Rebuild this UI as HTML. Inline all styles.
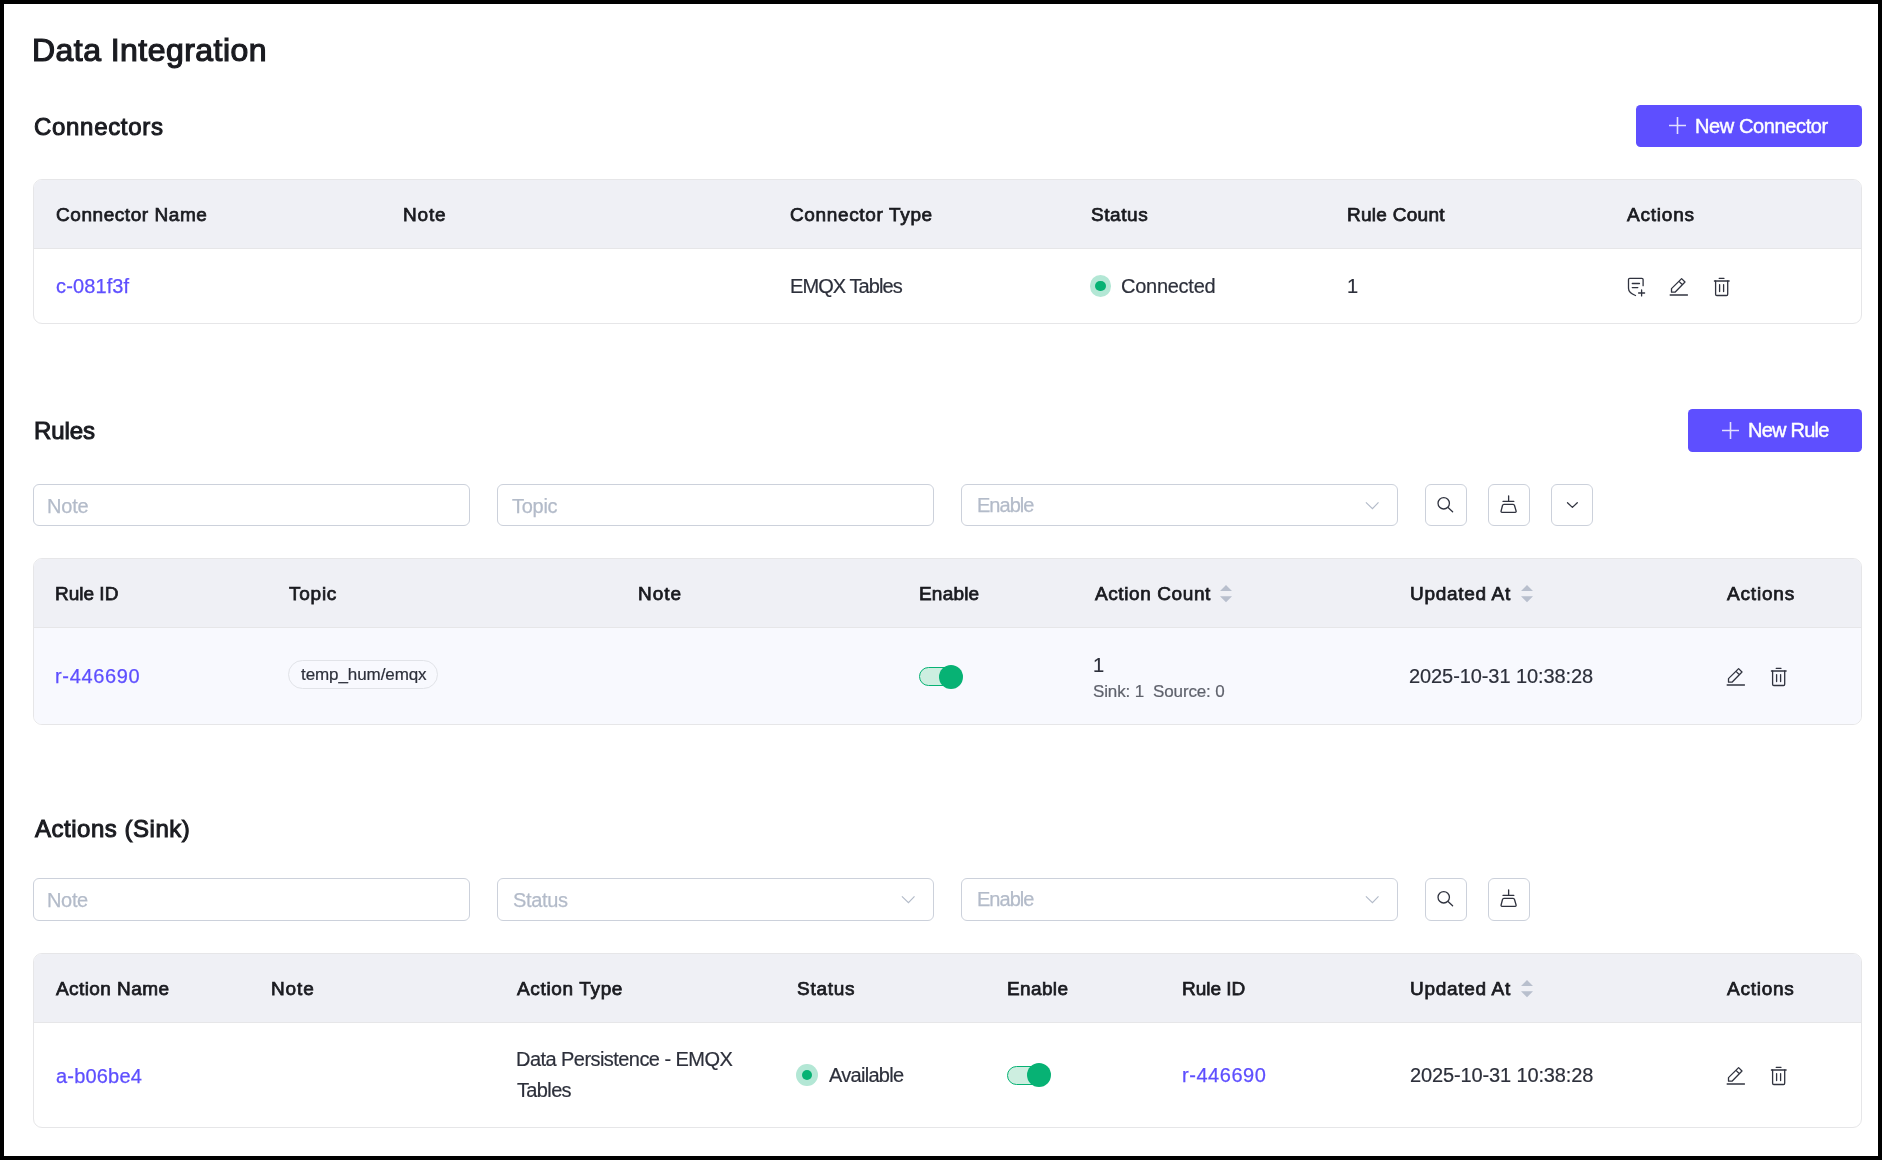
<!DOCTYPE html>
<html><head><meta charset="utf-8">
<style>
*{box-sizing:border-box;margin:0;padding:0}
html,body{width:1882px;height:1160px;overflow:hidden;background:#000}
body{font-family:"Liberation Sans",sans-serif;position:relative}
.a{position:absolute;white-space:nowrap}
.t{will-change:transform}
svg{position:absolute;overflow:visible}
</style></head><body>
<div class="a" style="left:4px;top:4px;width:1874px;height:1152px;background:#fff"></div>
<div class="a" style="left:1636px;top:105px;width:226px;height:42px;background:#5e4fff;border-radius:4.5px"></div>
<svg style="left:1669.4px;top:117.3px" width="17" height="17" viewBox="0 0 17 17"><path d="M8.5 0V17M0 8.5H17" stroke="rgba(255,255,255,0.82)" stroke-width="1.6" fill="none"/></svg>
<div class="a" style="left:33px;top:179px;width:1829px;height:145px;border:1px solid #e6e6e8;border-radius:9px;background:#fff"></div>
<div class="a" style="left:34px;top:180px;width:1827px;height:69px;background:#eff0f5;border-radius:8px 8px 0 0;border-bottom:1px solid #e6e6e8"></div>
<div class="a" style="left:1089.6px;top:275.1px;width:21.8px;height:21.8px;border-radius:50%;background:#b3e7d5"></div>
<div class="a" style="left:1095.2px;top:280.8px;width:10.6px;height:10.4px;border-radius:50%;background:#07b274"></div>
<svg style="left:1622px;top:274px" width="28" height="26" viewBox="0 0 28 26"><path d="M13.5 21.5C9.5 20 6.5 17.5 6.5 14.3V5.6Q6.5 4.4 7.7 4.4H19.9Q21.1 4.4 21.1 5.6V11.7M10.3 9.5H17.5M10.3 13.6H15.8M16.6 19H22.6M19.6 16V21.9" stroke="#30333f" stroke-width="1.3" fill="none" stroke-linecap="round"/></svg>
<svg style="left:1664px;top:274px" width="28" height="26" viewBox="0 0 28 26"><path d="M7.5 18.2V14.6L17.6 4.6L21 8L11 18.2Z M15.25 7.6L18.2 10.5" stroke="#30333f" stroke-width="1.3" fill="none" stroke-linejoin="round" stroke-linecap="round"/><path d="M5.7 21H23.9" stroke="#30333f" stroke-width="1.5"/></svg>
<svg style="left:1708px;top:274px" width="28" height="26" viewBox="0 0 28 26"><path d="M11.2 4.3H16" stroke="#30333f" stroke-width="1.3" fill="none" stroke-linecap="round"/><path d="M5.9 7H21.6" stroke="#30333f" stroke-width="1.5" fill="none"/><path d="M7.6 7V20.3Q7.6 21.5 8.8 21.5H18.5Q19.7 21.5 19.7 20.3V7M11.6 10.6V17.6M15.6 10.6V17.6" stroke="#30333f" stroke-width="1.3" fill="none" stroke-linecap="round"/></svg>
<div class="a" style="left:1688px;top:409px;width:174px;height:42.69999999999999px;background:#5e4fff;border-radius:4.5px"></div>
<svg style="left:1722px;top:421.6px" width="17" height="17" viewBox="0 0 17 17"><path d="M8.5 0V17M0 8.5H17" stroke="rgba(255,255,255,0.82)" stroke-width="1.6" fill="none"/></svg>
<div class="a" style="left:33px;top:484px;width:437px;height:42px;border:1px solid #ccd1db;border-radius:6px;background:#fff"></div>
<div class="a" style="left:497px;top:484px;width:437px;height:42px;border:1px solid #ccd1db;border-radius:6px;background:#fff"></div>
<div class="a" style="left:961px;top:484px;width:437px;height:42px;border:1px solid #ccd1db;border-radius:6px;background:#fff"></div>
<svg style="left:1365px;top:502px" width="14" height="8" viewBox="0 0 14 8"><path d="M0.9 0.3L7.45 6.75L13.5 0.4" stroke="#b3bbc9" stroke-width="1.15" fill="none"/></svg>
<div class="a" style="left:1425px;top:484px;width:42px;height:42px;border:1px solid #ccd1db;border-radius:6px;background:#fff"></div>
<svg style="left:1425px;top:484px" width="42" height="42" viewBox="0 0 42 42"><circle cx="18.72" cy="19.28" r="5.7" stroke="#30333f" stroke-width="1.3" fill="none"/><path d="M23.3 23.8L27.6 27.76" stroke="#30333f" stroke-width="1.3" stroke-linecap="round"/></svg>
<div class="a" style="left:1488px;top:484px;width:42px;height:42px;border:1px solid #ccd1db;border-radius:6px;background:#fff"></div>
<svg style="left:1488px;top:484px" width="42" height="42" viewBox="0 0 42 42"><path d="M20.62 11.83V17.3M15.03 17.41H25.8M15.9 20.41H25.1Q26.2 20.41 26.5 21.5L28.1 27Q28.38 28.28 27.2 28.28H14Q12.86 28.28 13.1 27L14.5 21.5Q14.83 20.41 15.9 20.41Z" stroke="#30333f" stroke-width="1.3" fill="none" stroke-linejoin="round" stroke-linecap="round"/></svg>
<div class="a" style="left:1551px;top:484px;width:42px;height:42px;border:1px solid #ccd1db;border-radius:6px;background:#fff"></div>
<svg style="left:1551px;top:484px" width="42" height="42" viewBox="0 0 42 42"><path d="M16.5 18.8L21.4 23.4L26.3 18.8" stroke="#30333f" stroke-width="1.3" fill="none" stroke-linecap="round" stroke-linejoin="round"/></svg>
<div class="a" style="left:33px;top:558px;width:1829px;height:167px;border:1px solid #e6e6e8;border-radius:9px;background:#fff"></div>
<div class="a" style="left:34px;top:628px;width:1827px;height:96px;background:#f8f9fe;border-radius:0 0 8px 8px"></div>
<div class="a" style="left:34px;top:559px;width:1827px;height:69px;background:#eff0f5;border-radius:8px 8px 0 0;border-bottom:1px solid #e6e6e8"></div>
<svg style="left:1220px;top:585px" width="12" height="18" viewBox="0 0 12 18"><path d="M6 0L12 6H0Z M6 17.2L12 11.2H0Z" fill="#b8bfcd"/></svg>
<svg style="left:1521px;top:585px" width="12" height="18" viewBox="0 0 12 18"><path d="M6 0L12 6H0Z M6 17.2L12 11.2H0Z" fill="#b8bfcd"/></svg>
<div class="a" style="left:288px;top:660px;width:150px;height:29px;border:1px solid #e1e3e8;border-radius:15px"></div>
<div class="a" style="left:919px;top:667.0px;width:37px;height:19px;border:1px solid #07b274;border-radius:50px;background:#cdeee0"></div>
<div class="a" style="left:939px;top:664.5px;width:24px;height:24px;border-radius:50%;background:#07b274"></div>
<svg style="left:1721px;top:664px" width="28" height="26" viewBox="0 0 28 26"><path d="M7.5 18.2V14.6L17.6 4.6L21 8L11 18.2Z M15.25 7.6L18.2 10.5" stroke="#30333f" stroke-width="1.3" fill="none" stroke-linejoin="round" stroke-linecap="round"/><path d="M5.7 21H23.9" stroke="#30333f" stroke-width="1.5"/></svg>
<svg style="left:1765px;top:664px" width="28" height="26" viewBox="0 0 28 26"><path d="M11.2 4.3H16" stroke="#30333f" stroke-width="1.3" fill="none" stroke-linecap="round"/><path d="M5.9 7H21.6" stroke="#30333f" stroke-width="1.5" fill="none"/><path d="M7.6 7V20.3Q7.6 21.5 8.8 21.5H18.5Q19.7 21.5 19.7 20.3V7M11.6 10.6V17.6M15.6 10.6V17.6" stroke="#30333f" stroke-width="1.3" fill="none" stroke-linecap="round"/></svg>
<div class="a" style="left:33px;top:878px;width:437px;height:43px;border:1px solid #ccd1db;border-radius:6px;background:#fff"></div>
<div class="a" style="left:497px;top:878px;width:437px;height:43px;border:1px solid #ccd1db;border-radius:6px;background:#fff"></div>
<svg style="left:901px;top:896px" width="14" height="8" viewBox="0 0 14 8"><path d="M0.9 0.3L7.45 6.75L13.5 0.4" stroke="#b3bbc9" stroke-width="1.15" fill="none"/></svg>
<div class="a" style="left:961px;top:878px;width:437px;height:43px;border:1px solid #ccd1db;border-radius:6px;background:#fff"></div>
<svg style="left:1365px;top:896px" width="14" height="8" viewBox="0 0 14 8"><path d="M0.9 0.3L7.45 6.75L13.5 0.4" stroke="#b3bbc9" stroke-width="1.15" fill="none"/></svg>
<div class="a" style="left:1425px;top:878px;width:42px;height:43px;border:1px solid #ccd1db;border-radius:6px;background:#fff"></div>
<svg style="left:1425px;top:878px" width="42" height="42" viewBox="0 0 42 42"><circle cx="18.72" cy="19.28" r="5.7" stroke="#30333f" stroke-width="1.3" fill="none"/><path d="M23.3 23.8L27.6 27.76" stroke="#30333f" stroke-width="1.3" stroke-linecap="round"/></svg>
<div class="a" style="left:1488px;top:878px;width:42px;height:43px;border:1px solid #ccd1db;border-radius:6px;background:#fff"></div>
<svg style="left:1488px;top:878px" width="42" height="42" viewBox="0 0 42 42"><path d="M20.62 11.83V17.3M15.03 17.41H25.8M15.9 20.41H25.1Q26.2 20.41 26.5 21.5L28.1 27Q28.38 28.28 27.2 28.28H14Q12.86 28.28 13.1 27L14.5 21.5Q14.83 20.41 15.9 20.41Z" stroke="#30333f" stroke-width="1.3" fill="none" stroke-linejoin="round" stroke-linecap="round"/></svg>
<div class="a" style="left:33px;top:953px;width:1829px;height:175px;border:1px solid #e6e6e8;border-radius:9px;background:#fff"></div>
<div class="a" style="left:34px;top:954px;width:1827px;height:69px;background:#eff0f5;border-radius:8px 8px 0 0;border-bottom:1px solid #e6e6e8"></div>
<svg style="left:1521px;top:980px" width="12" height="18" viewBox="0 0 12 18"><path d="M6 0L12 6H0Z M6 17.2L12 11.2H0Z" fill="#b8bfcd"/></svg>
<div class="a" style="left:796.1px;top:1064.1px;width:21.8px;height:21.8px;border-radius:50%;background:#b3e7d5"></div>
<div class="a" style="left:801.7px;top:1069.8px;width:10.6px;height:10.4px;border-radius:50%;background:#07b274"></div>
<div class="a" style="left:1007px;top:1065.5px;width:37px;height:19px;border:1px solid #07b274;border-radius:50px;background:#cdeee0"></div>
<div class="a" style="left:1027px;top:1063px;width:24px;height:24px;border-radius:50%;background:#07b274"></div>
<svg style="left:1721px;top:1063px" width="28" height="26" viewBox="0 0 28 26"><path d="M7.5 18.2V14.6L17.6 4.6L21 8L11 18.2Z M15.25 7.6L18.2 10.5" stroke="#30333f" stroke-width="1.3" fill="none" stroke-linejoin="round" stroke-linecap="round"/><path d="M5.7 21H23.9" stroke="#30333f" stroke-width="1.5"/></svg>
<svg style="left:1765px;top:1063px" width="28" height="26" viewBox="0 0 28 26"><path d="M11.2 4.3H16" stroke="#30333f" stroke-width="1.3" fill="none" stroke-linecap="round"/><path d="M5.9 7H21.6" stroke="#30333f" stroke-width="1.5" fill="none"/><path d="M7.6 7V20.3Q7.6 21.5 8.8 21.5H18.5Q19.7 21.5 19.7 20.3V7M11.6 10.6V17.6M15.6 10.6V17.6" stroke="#30333f" stroke-width="1.3" fill="none" stroke-linecap="round"/></svg>
<div class="a t" style="left:31.70px;top:34.11px;font-size:32px;line-height:32px;color:#1a1b20;letter-spacing:0.453px;-webkit-text-stroke:1.2px #1a1b20;">Data Integration</div>
<div class="a t" style="left:33.70px;top:114.88px;font-size:24px;line-height:24px;color:#1a1b20;letter-spacing:0.689px;-webkit-text-stroke:1.0px #1a1b20;">Connectors</div>
<div class="a t" style="left:33.60px;top:418.78px;font-size:24px;line-height:24px;color:#1a1b20;letter-spacing:-0.100px;-webkit-text-stroke:1.0px #1a1b20;">Rules</div>
<div class="a t" style="left:34.80px;top:816.98px;font-size:24px;line-height:24px;color:#1a1b20;letter-spacing:0.523px;-webkit-text-stroke:1.0px #1a1b20;">Actions (Sink)</div>
<div class="a t" style="left:1695.20px;top:116.07px;font-size:20px;line-height:20px;color:#fff;letter-spacing:-0.383px;-webkit-text-stroke:0.45px #fff;">New Connector</div>
<div class="a t" style="left:1747.60px;top:420.27px;font-size:20px;line-height:20px;color:#fff;letter-spacing:-0.757px;-webkit-text-stroke:0.45px #fff;">New Rule</div>
<div class="a t" style="left:55.80px;top:204.84px;font-size:19px;line-height:19px;color:#1a1b20;letter-spacing:0.554px;-webkit-text-stroke:0.75px #1a1b20;">Connector Name</div>
<div class="a t" style="left:403.20px;top:204.84px;font-size:19px;line-height:19px;color:#1a1b20;letter-spacing:0.800px;-webkit-text-stroke:0.75px #1a1b20;">Note</div>
<div class="a t" style="left:790.10px;top:204.84px;font-size:19px;line-height:19px;color:#1a1b20;letter-spacing:0.646px;-webkit-text-stroke:0.75px #1a1b20;">Connector Type</div>
<div class="a t" style="left:1090.60px;top:204.84px;font-size:19px;line-height:19px;color:#1a1b20;letter-spacing:0.580px;-webkit-text-stroke:0.75px #1a1b20;">Status</div>
<div class="a t" style="left:1346.50px;top:204.84px;font-size:19px;line-height:19px;color:#1a1b20;letter-spacing:0.278px;-webkit-text-stroke:0.75px #1a1b20;">Rule Count</div>
<div class="a t" style="left:1626.50px;top:204.84px;font-size:19px;line-height:19px;color:#1a1b20;letter-spacing:0.800px;-webkit-text-stroke:0.75px #1a1b20;">Actions</div>
<div class="a t" style="left:55.80px;top:275.97px;font-size:20px;line-height:20px;color:#5e4fff;letter-spacing:0.129px;-webkit-text-stroke:0.25px #5e4fff;">c-081f3f</div>
<div class="a t" style="left:790.00px;top:276.27px;font-size:20px;line-height:20px;color:#2d303b;letter-spacing:-0.920px;-webkit-text-stroke:0.2px #2d303b;">EMQX Tables</div>
<div class="a t" style="left:1121.20px;top:276.27px;font-size:20px;line-height:20px;color:#2d303b;letter-spacing:-0.263px;-webkit-text-stroke:0.2px #2d303b;">Connected</div>
<div class="a t" style="left:1346.50px;top:276.27px;font-size:20px;line-height:20px;color:#2d303b;letter-spacing:0.000px;-webkit-text-stroke:0.2px #2d303b;">1</div>
<div class="a t" style="left:46.90px;top:495.97px;font-size:20px;line-height:20px;color:#b3bbc9;letter-spacing:-0.200px;-webkit-text-stroke:0.25px #b3bbc9;">Note</div>
<div class="a t" style="left:512.10px;top:495.87px;font-size:20px;line-height:20px;color:#b3bbc9;letter-spacing:-0.275px;-webkit-text-stroke:0.25px #b3bbc9;">Topic</div>
<div class="a t" style="left:977.00px;top:494.97px;font-size:20px;line-height:20px;color:#b3bbc9;letter-spacing:-0.980px;-webkit-text-stroke:0.25px #b3bbc9;">Enable</div>
<div class="a t" style="left:54.50px;top:583.74px;font-size:19px;line-height:19px;color:#1a1b20;letter-spacing:0.000px;-webkit-text-stroke:0.75px #1a1b20;">Rule ID</div>
<div class="a t" style="left:289.30px;top:583.74px;font-size:19px;line-height:19px;color:#1a1b20;letter-spacing:0.750px;-webkit-text-stroke:0.75px #1a1b20;">Topic</div>
<div class="a t" style="left:638.40px;top:583.74px;font-size:19px;line-height:19px;color:#1a1b20;letter-spacing:1.000px;-webkit-text-stroke:0.75px #1a1b20;">Note</div>
<div class="a t" style="left:919.20px;top:583.74px;font-size:19px;line-height:19px;color:#1a1b20;letter-spacing:0.200px;-webkit-text-stroke:0.75px #1a1b20;">Enable</div>
<div class="a t" style="left:1094.50px;top:583.74px;font-size:19px;line-height:19px;color:#1a1b20;letter-spacing:0.600px;-webkit-text-stroke:0.75px #1a1b20;">Action Count</div>
<div class="a t" style="left:1409.90px;top:583.74px;font-size:19px;line-height:19px;color:#1a1b20;letter-spacing:0.689px;-webkit-text-stroke:0.75px #1a1b20;">Updated At</div>
<div class="a t" style="left:1726.70px;top:583.74px;font-size:19px;line-height:19px;color:#1a1b20;letter-spacing:0.817px;-webkit-text-stroke:0.75px #1a1b20;">Actions</div>
<div class="a t" style="left:54.70px;top:665.97px;font-size:20px;line-height:20px;color:#5e4fff;letter-spacing:0.657px;-webkit-text-stroke:0.25px #5e4fff;">r-446690</div>
<div class="a t" style="left:300.60px;top:666.11px;font-size:17px;line-height:17px;color:#2d303b;letter-spacing:-0.083px;-webkit-text-stroke:0.2px #2d303b;">temp_hum/emqx</div>
<div class="a t" style="left:1093.30px;top:655.07px;font-size:20px;line-height:20px;color:#2d303b;letter-spacing:0.000px;-webkit-text-stroke:0.2px #2d303b;">1</div>
<div class="a t" style="left:1093.00px;top:683.11px;font-size:17px;line-height:17px;color:#5f626c;letter-spacing:-0.147px;-webkit-text-stroke:0.2px #5f626c;">Sink: 1&nbsp; Source: 0</div>
<div class="a t" style="left:1409.40px;top:666.07px;font-size:20px;line-height:20px;color:#2d303b;letter-spacing:-0.089px;-webkit-text-stroke:0.2px #2d303b;">2025-10-31 10:38:28</div>
<div class="a t" style="left:47.20px;top:889.97px;font-size:20px;line-height:20px;color:#b3bbc9;letter-spacing:-0.333px;-webkit-text-stroke:0.25px #b3bbc9;">Note</div>
<div class="a t" style="left:512.80px;top:889.97px;font-size:20px;line-height:20px;color:#b3bbc9;letter-spacing:-0.320px;-webkit-text-stroke:0.25px #b3bbc9;">Status</div>
<div class="a t" style="left:977.00px;top:889.27px;font-size:20px;line-height:20px;color:#b3bbc9;letter-spacing:-0.980px;-webkit-text-stroke:0.25px #b3bbc9;">Enable</div>
<div class="a t" style="left:55.90px;top:978.84px;font-size:19px;line-height:19px;color:#1a1b20;letter-spacing:0.420px;-webkit-text-stroke:0.75px #1a1b20;">Action Name</div>
<div class="a t" style="left:270.80px;top:978.84px;font-size:19px;line-height:19px;color:#1a1b20;letter-spacing:0.900px;-webkit-text-stroke:0.75px #1a1b20;">Note</div>
<div class="a t" style="left:517.20px;top:978.84px;font-size:19px;line-height:19px;color:#1a1b20;letter-spacing:0.650px;-webkit-text-stroke:0.75px #1a1b20;">Action Type</div>
<div class="a t" style="left:796.70px;top:978.84px;font-size:19px;line-height:19px;color:#1a1b20;letter-spacing:0.740px;-webkit-text-stroke:0.75px #1a1b20;">Status</div>
<div class="a t" style="left:1006.70px;top:978.84px;font-size:19px;line-height:19px;color:#1a1b20;letter-spacing:0.360px;-webkit-text-stroke:0.75px #1a1b20;">Enable</div>
<div class="a t" style="left:1181.50px;top:978.84px;font-size:19px;line-height:19px;color:#1a1b20;letter-spacing:-0.017px;-webkit-text-stroke:0.75px #1a1b20;">Rule ID</div>
<div class="a t" style="left:1409.80px;top:978.84px;font-size:19px;line-height:19px;color:#1a1b20;letter-spacing:0.689px;-webkit-text-stroke:0.75px #1a1b20;">Updated At</div>
<div class="a t" style="left:1726.90px;top:978.84px;font-size:19px;line-height:19px;color:#1a1b20;letter-spacing:0.750px;-webkit-text-stroke:0.75px #1a1b20;">Actions</div>
<div class="a t" style="left:55.70px;top:1066.07px;font-size:20px;line-height:20px;color:#5e4fff;letter-spacing:0.186px;-webkit-text-stroke:0.25px #5e4fff;">a-b06be4</div>
<div class="a t" style="left:516.30px;top:1049.07px;font-size:20px;line-height:20px;color:#2d303b;letter-spacing:-0.555px;-webkit-text-stroke:0.2px #2d303b;">Data Persistence - EMQX</div>
<div class="a t" style="left:517.30px;top:1079.87px;font-size:20px;line-height:20px;color:#2d303b;letter-spacing:-0.640px;-webkit-text-stroke:0.2px #2d303b;">Tables</div>
<div class="a t" style="left:829.00px;top:1064.87px;font-size:20px;line-height:20px;color:#2d303b;letter-spacing:-0.713px;-webkit-text-stroke:0.2px #2d303b;">Available</div>
<div class="a t" style="left:1181.80px;top:1064.87px;font-size:20px;line-height:20px;color:#5e4fff;letter-spacing:0.543px;-webkit-text-stroke:0.25px #5e4fff;">r-446690</div>
<div class="a t" style="left:1409.80px;top:1065.07px;font-size:20px;line-height:20px;color:#2d303b;letter-spacing:-0.128px;-webkit-text-stroke:0.2px #2d303b;">2025-10-31 10:38:28</div>
</body></html>
